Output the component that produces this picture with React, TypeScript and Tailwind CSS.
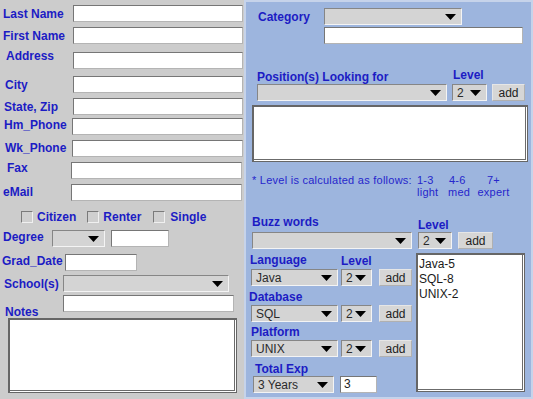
import type { ReactNode } from "react";

const Label = ({ children, className = "" }: { children: ReactNode; className?: string }) => (
  <span className={`text-[12px] leading-[14px] font-bold text-[#1c1cc4] whitespace-nowrap ${className}`}>
    {children}
  </span>
);

const TextBox = ({ className = "", value = "" }: { className?: string; value?: string }) => (
  <div
    className={`h-[17px] bg-white border border-[#767676] border-b-[#b4b4b4] border-r-[#b4b4b4] text-[12px] leading-[15px] pl-[3px] text-[#222] ${className}`}
  >
    {value}
  </div>
);

const Arrow = () => (
  <svg width="11" height="6" viewBox="0 0 11 6" className="shrink-0">
    <polygon points="0,0 11,0 5.5,6" fill="#000" />
  </svg>
);

const Select = ({ className = "", value = "" }: { className?: string; value?: string }) => (
  <div
    className={`h-[17px] bg-[#d4d4d4] border border-[#868686] border-b-[#f4f4f4] border-r-[#f4f4f4] flex items-center justify-between pl-[4px] pr-[5px] text-[12px] text-[#2a2a2a] ${className}`}
  >
    <span>{value}</span>
    <Arrow />
  </div>
);

const AddButton = ({ className = "" }: { className?: string }) => (
  <div
    className={`h-[17px] bg-[#d6d6d6] border border-[#e6e6e6] border-b-[#b0b0b0] border-r-[#b0b0b0] flex items-center justify-center text-[12px] text-[#222] ${className}`}
  >
    add
  </div>
);

const Check = ({ className = "" }: { className?: string }) => (
  <div
    className={`w-[12px] h-[12px] bg-[#cfcfcf] border border-[#7a7a7a] border-b-[#f0f0f0] border-r-[#f0f0f0] ${className}`}
  />
);

const Area = ({ className = "", children }: { className?: string; children?: ReactNode }) => (
  <div
    className={`bg-white border-t-2 border-l-2 border-b border-r border-[#666666] shadow-[inset_-1px_-1px_0_#fff,inset_-2px_-2px_0_#6b6b6b] ${className}`}
  >
    {children}
  </div>
);

export default function App() {
  return (
    <div className="w-[533px] h-[399px] flex overflow-hidden font-['Liberation_Sans',Arial,sans-serif]">
      {/* personal info */}
      <div className="w-[244px] bg-[#cccccc] flex flex-col">
        <div className="flex items-center h-[17px] mt-[5px]">
          <Label className="w-[73px] pl-[3px]">Last Name</Label>
          <TextBox className="w-[170px]" />
        </div>
        <div className="flex items-center h-[17px] mt-[5px]">
          <Label className="w-[73px] pl-[3px]">First Name</Label>
          <TextBox className="w-[170px]" />
        </div>
        <div className="flex items-center h-[17px] mt-[8px]">
          <Label className="w-[73px] pl-[6px] mb-[9px]">Address</Label>
          <TextBox className="w-[170px]" />
        </div>
        <div className="flex items-center h-[17px] mt-[7px]">
          <Label className="w-[73px] pl-[5px]">City</Label>
          <TextBox className="w-[170px]" />
        </div>
        <div className="flex items-center h-[17px] mt-[5px]">
          <Label className="w-[73px] pl-[4px]">State, Zip</Label>
          <TextBox className="w-[170px]" />
        </div>
        <div className="flex items-center h-[17px] mt-[3px]">
          <Label className="w-[72px] pl-[4px] mb-[4px]">Hm_Phone</Label>
          <TextBox className="w-[171px]" />
        </div>
        <div className="flex items-center h-[17px] mt-[5px]">
          <Label className="w-[72px] pl-[5px] mb-[2px]">Wk_Phone</Label>
          <TextBox className="w-[171px]" />
        </div>
        <div className="flex items-center h-[17px] mt-[5px]">
          <Label className="w-[71px] pl-[7px] mb-[5px]">Fax</Label>
          <TextBox className="w-[171px]" />
        </div>
        <div className="flex items-center h-[17px] mt-[5px]">
          <Label className="w-[71px] pl-[3px] mb-[2px]">eMail</Label>
          <TextBox className="w-[171px]" />
        </div>

        <div className="flex items-center h-[12px] mt-[10px] pl-[21px]">
          <Check />
          <Label className="ml-[4px]">Citizen</Label>
          <Check className="ml-[11px]" />
          <Label className="ml-[4px]">Renter</Label>
          <Check className="ml-[12px]" />
          <Label className="ml-[5px]">Single</Label>
        </div>

        <div className="flex items-center h-[17px] mt-[7px]">
          <Label className="w-[52px] pl-[3px] mb-[3px]">Degree</Label>
          <Select className="w-[53px]" />
          <TextBox className="w-[58px] ml-[6px]" />
        </div>
        <div className="flex items-center h-[17px] mt-[7px]">
          <Label className="w-[65px] pl-[2px] mb-[4px]">Grad_Date</Label>
          <TextBox className="w-[72px]" />
        </div>
        <div className="flex items-center h-[17px] mt-[4px]">
          <Label className="w-[63px] pl-[4px]">School(s)</Label>
          <Select className="w-[166px]" />
        </div>
        <div className="flex items-start h-[23px] mt-[3px]">
          <Label className="w-[63px] pl-[5px] mt-[10px]">Notes</Label>
          <TextBox className="w-[171px]" />
        </div>
        <Area className="ml-[8px] w-[229px] h-[75px]" />
      </div>

      {/* skills */}
      <div className="flex-1 bg-[#9db5de] border-2 border-[#c6d3ea] flex flex-col">
        <div className="flex items-start mt-[6px]">
          <Label className="w-[78px] pl-[12px] mt-[2px]">Category</Label>
          <div className="flex flex-col gap-[2px]">
            <Select className="w-[138px]" />
            <TextBox className="w-[199px]" />
          </div>
        </div>

        <div className="flex items-end h-[14px] mt-[26px]">
          <Label className="w-[207px] pl-[11px]">Position(s) Looking for</Label>
          <Label className="mb-[2px]">Level</Label>
        </div>
        <div className="flex pl-[11px]">
          <Select className="w-[190px]" />
          <Select className="w-[35px] ml-[5px]" value="2" />
          <AddButton className="w-[33px] ml-[5px]" />
        </div>
        <Area className="mt-[4px] ml-[6px] w-[276px] h-[57px]" />

        <div className="flex mt-[12px] text-[11px] leading-[12px] tracking-[0.25px] text-[#2626cc]">
          <div className="w-[171px] pl-[6px] whitespace-nowrap">* Level is calculated as follows:</div>
          <div className="w-[31px]">
            <div>1-3</div>
            <div>light</div>
          </div>
          <div className="w-[29px]">
            <div className="pl-[1px]">4-6</div>
            <div>med</div>
          </div>
          <div className="w-[33px] text-center">
            <div>7+</div>
            <div>expert</div>
          </div>
        </div>

        <div className="flex items-end h-[17px] mt-[17px]">
          <Label className="w-[172px] pl-[6px] mb-[3px]">Buzz words</Label>
          <Label>Level</Label>
        </div>
        <div className="flex pl-[6px]">
          <Select className="w-[160px]" />
          <Select className="w-[34px] ml-[6px]" value="2" />
          <AddButton className="w-[35px] ml-[6px]" />
        </div>

        <div className="flex mt-[4px]">
          <div className="w-[170px] flex flex-col">
            <div className="flex items-start h-[16px]">
              <Label className="w-[95px] pl-[4px]">Language</Label>
              <Label className="mt-[1px]">Level</Label>
            </div>
            <div className="flex pl-[5px]">
              <Select className="w-[87px]" value="Java" />
              <Select className="w-[31px] ml-[3px]" value="2" />
              <AddButton className="w-[33px] ml-[7px]" />
            </div>
            <div className="flex items-start h-[19px] pt-[4px] pl-[3px]">
              <Label>Database</Label>
            </div>
            <div className="flex pl-[5px]">
              <Select className="w-[87px]" value="SQL" />
              <Select className="w-[31px] ml-[3px]" value="2" />
              <AddButton className="w-[33px] ml-[7px]" />
            </div>
            <div className="flex items-start h-[18px] pt-[3px] pl-[5px]">
              <Label>Platform</Label>
            </div>
            <div className="flex pl-[5px]">
              <Select className="w-[87px]" value="UNIX" />
              <Select className="w-[31px] ml-[3px]" value="2" />
              <AddButton className="w-[33px] ml-[7px]" />
            </div>
            <div className="flex items-start h-[19px] pt-[5px] pl-[9px]">
              <Label>Total Exp</Label>
            </div>
            <div className="flex items-center pl-[7px]">
              <Select className="w-[81px]" value="3 Years" />
              <TextBox className="w-[37px] ml-[6px] h-[16px]" value="3" />
            </div>
          </div>
          <Area className="w-[109px] h-[139px] pt-[2px] pl-[1px] text-[12px] leading-[15px] text-[#1a1a1a]">
            <div>Java-5</div>
            <div>SQL-8</div>
            <div>UNIX-2</div>
          </Area>
        </div>
      </div>
    </div>
  );
}
